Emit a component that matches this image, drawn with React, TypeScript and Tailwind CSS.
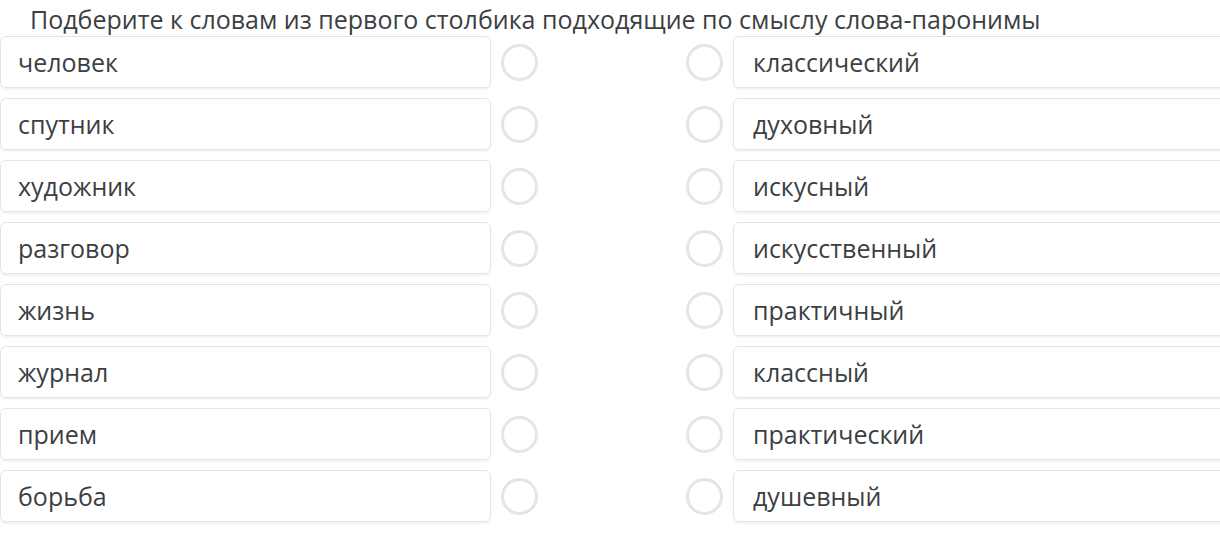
const left = ["человек", "спутник", "художник", "разговор", "жизнь", "журнал", "прием", "борьба"];
const right = [
  "классический",
  "духовный",
  "искусный",
  "искусственный",
  "практичный",
  "классный",
  "практический",
  "душевный",
];

function Circle() {
  return <div className="w-[37px] h-[37px] rounded-full border-[3px] border-[#e4e5e7] shrink-0" />;
}

export default function App() {
  return (
    <div className="w-[1220px] h-[550px] overflow-hidden bg-white font-['Open_Sans',sans-serif] text-[#3b3f44]">
      <div className="h-[36px] pl-[30px] pt-[3px] text-[25px] leading-[32px] whitespace-nowrap">
        Подберите к словам из первого столбика подходящие по смыслу слова-паронимы
      </div>
      <div className="flex flex-col gap-[10px]">
        {left.map((word, i) => (
          <div key={word} className="flex items-center h-[52px]">
            <div className="w-[491px] h-full shrink-0 flex items-center pl-[17px] pt-[2px] rounded-[6px] border border-[#e3e4e6] shadow-[0_2px_2px_rgba(0,0,0,0.05)] text-[25px]">
              {word}
            </div>
            <div className="ml-[10px]">
              <Circle />
            </div>
            <div className="ml-[148px]">
              <Circle />
            </div>
            <div className="ml-[10px] w-[520px] h-full shrink-0 flex items-center pl-[19px] pt-[2px] rounded-[6px] border border-[#e3e4e6] shadow-[0_2px_2px_rgba(0,0,0,0.05)] text-[25px]">
              {right[i]}
            </div>
          </div>
        ))}
      </div>
    </div>
  );
}
